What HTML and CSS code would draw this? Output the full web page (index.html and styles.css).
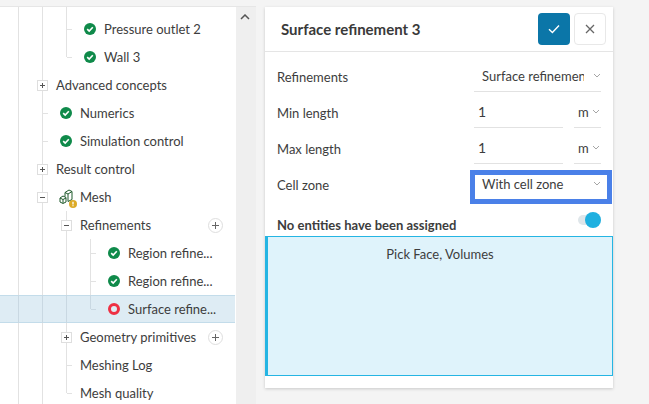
FILE: index.html
```html
<!DOCTYPE html>
<html lang="en">
<head>
<meta charset="utf-8">
<title>Surface refinement 3</title>
<link rel="stylesheet" href="styles.css">
</head>
<body>
<div class="page">
  <aside class="tree-panel">
    <div class="tree">
      <div class="row"><i class="g"></i><i class="g"></i><i class="g tee"></i><span class="ic"><svg class="ok" viewBox="0 0 12 12"><circle cx="6" cy="6" r="6"/><path d="M3.2 6.1l2 2 3.6-3.8"/></svg></span></div>
      <div class="row"><i class="g"></i><i class="g"></i><i class="g tee"></i><span class="ic"><svg class="ok" viewBox="0 0 12 12"><circle cx="6" cy="6" r="6"/><path d="M3.2 6.1l2 2 3.6-3.8"/></svg></span><span class="t">Pressure outlet 2</span></div>
      <div class="row"><i class="g"></i><i class="g"></i><i class="g end"></i><span class="ic"><svg class="ok" viewBox="0 0 12 12"><circle cx="6" cy="6" r="6"/><path d="M3.2 6.1l2 2 3.6-3.8"/></svg></span><span class="t">Wall 3</span></div>
      <div class="row"><i class="g"></i><i class="g"><b class="box plus"></b></i><span class="t">Advanced concepts</span></div>
      <div class="row"><i class="g"></i><i class="g tee"></i><span class="ic"><svg class="ok" viewBox="0 0 12 12"><circle cx="6" cy="6" r="6"/><path d="M3.2 6.1l2 2 3.6-3.8"/></svg></span><span class="t">Numerics</span></div>
      <div class="row"><i class="g"></i><i class="g tee"></i><span class="ic"><svg class="ok" viewBox="0 0 12 12"><circle cx="6" cy="6" r="6"/><path d="M3.2 6.1l2 2 3.6-3.8"/></svg></span><span class="t">Simulation control</span></div>
      <div class="row"><i class="g"></i><i class="g"><b class="box plus"></b></i><span class="t">Result control</span></div>
      <div class="row"><i class="g"></i><i class="g"><b class="box"></b></i><span class="ic"><svg class="mesh" viewBox="0 0 20 20"><path class="cube" d="M9 5.500L13 3l3 1.500v8l-4 2V7L9 5.500zM9 5.500v4M12 7l4-2.500M4 11l3-2 3 1.500v4.500l-3 1.500-3-1.500zM4 11l3 1.500 3-1.500M7 12.500v3.500"/><circle class="warn" cx="17" cy="17" r="4"/><path class="warn-mark" d="M17 14.700v2.700M17 18.300v.9"/></svg></span><span class="t">Mesh</span></div>
      <div class="row"><i class="g"></i><i class="g"></i><i class="g"><b class="box"></b></i><span class="t grow">Refinements</span><span class="add"></span></div>
      <div class="row"><i class="g"></i><i class="g"></i><i class="g"></i><i class="g tee"></i><span class="ic"><svg class="ok" viewBox="0 0 12 12"><circle cx="6" cy="6" r="6"/><path d="M3.2 6.1l2 2 3.6-3.8"/></svg></span><span class="t">Region refine...</span></div>
      <div class="row"><i class="g"></i><i class="g"></i><i class="g"></i><i class="g tee"></i><span class="ic"><svg class="ok" viewBox="0 0 12 12"><circle cx="6" cy="6" r="6"/><path d="M3.2 6.1l2 2 3.6-3.8"/></svg></span><span class="t">Region refine...</span></div>
      <div class="row selected"><i class="g"></i><i class="g"></i><i class="g"></i><i class="g end"></i><span class="ic"><span class="err"></span></span><span class="t">Surface refine...</span></div>
      <div class="row"><i class="g"></i><i class="g"></i><i class="g"><b class="box plus"></b></i><span class="t grow">Geometry primitives</span><span class="add"></span></div>
      <div class="row"><i class="g"></i><i class="g"></i><i class="g tee"></i><span class="t">Meshing Log</span></div>
      <div class="row"><i class="g"></i><i class="g"></i><i class="g end"></i><span class="t">Mesh quality</span></div>
    </div>
    <div class="scrollbar"><svg viewBox="0 0 10 6"><path d="M1 5l4-4 4 4"/></svg></div>
  </aside>

  <section class="card">
    <header class="card-head">
      <h1>Surface refinement 3</h1>
      <button class="btn ok-btn" type="button"><svg viewBox="0 0 12 10"><path d="M1 5.200l3.400 3.300L11 1.500"/></svg></button>
      <button class="btn close-btn" type="button"><svg viewBox="0 0 10 10"><path d="M1 1l8 8M9 1l-8 8"/></svg></button>
    </header>
    <div class="form">
      <div class="field">
        <label>Refinements</label>
        <div class="control select"><span class="val clip">Surface refinement</span><svg class="chev" viewBox="0 0 8 5"><path d="M1 1l3 3 3-3"/></svg></div>
      </div>
      <div class="field">
        <label>Min length</label>
        <div class="control input"><span class="num">1</span></div>
        <div class="control unit"><span>m</span><svg class="chev" viewBox="0 0 8 5"><path d="M1 1l3 3 3-3"/></svg></div>
      </div>
      <div class="field">
        <label>Max length</label>
        <div class="control input"><span class="num">1</span></div>
        <div class="control unit"><span>m</span><svg class="chev" viewBox="0 0 8 5"><path d="M1 1l3 3 3-3"/></svg></div>
      </div>
      <div class="field">
        <label>Cell zone</label>
        <div class="control select focus"><span class="val">With cell zone</span><svg class="chev" viewBox="0 0 8 5"><path d="M1 1l3 3 3-3"/></svg><span class="highlight"></span></div>
      </div>
      <div class="assign">
        <strong>No entities have been assigned</strong>
        <span class="toggle"><span class="knob"></span></span>
      </div>
    </div>
    <div class="picker">Pick Face, Volumes</div>
  </section>
</div>
</body>
</html>
```

FILE: styles.css
```css
* { box-sizing: border-box; }
html, body { margin: 0; height: 100%; overflow: hidden; }
body { background: #f4f4f4; font-family: Lato, "Open Sans", sans-serif; font-size: 13px; color: #3d3d3d; }
.page { display: flex; align-items: flex-start; height: 404px; padding-top: 6px; }

.tree-panel { display: flex; width: 256px; height: 398px; border-top: 1px solid #e6e6e6; overflow: hidden; flex: none; background: #fff; }
.tree { width: 236px; flex: none; margin-top: -20px; padding-left: 6px; }
.row { display: flex; align-items: center; height: 28px; margin-left: -6px; padding-left: 6px; padding-right: 13px; white-space: nowrap; }
.row.selected { background: #deecf4; box-shadow: inset 0 1px 0 #c3dcea, inset 0 -1px 0 #c3dcea; margin-right: 1px; padding-right: 12px; }
.g { position: relative; display: block; width: 24px; height: 28px; flex: none; }
.g::before { content: ""; position: absolute; left: 12px; top: 0; bottom: 0; width: 1px; background: #e2e2e2; }
.g.end::before { bottom: 14px; }
.g.tee::after, .g.end::after { content: ""; position: absolute; left: 13px; top: 14px; width: 5px; height: 1px; background: #e2e2e2; }
.selected .g::before, .selected .g::after { background: #c9d8e2; }
.box { position: absolute; left: 7px; top: 9px; width: 11px; height: 11px; background: #fff; border: 1px solid #dedede; }
.box::before { content: ""; position: absolute; left: 2px; top: 4px; width: 5px; height: 1px; background: #555; }
.box.plus::after { content: ""; position: absolute; left: 4px; top: 2px; width: 1px; height: 5px; background: #555; }
.ic { display: flex; align-items: center; justify-content: center; width: 24px; height: 28px; flex: none; }
.ok { width: 12px; height: 12px; }
.ok circle { fill: #0f8a4a; }
.ok path { fill: none; stroke: #fff; stroke-width: 1.6; }
.err { display: block; width: 12px; height: 12px; border-radius: 50%; border: 3px solid #ee3043; }
.mesh { width: 20px; height: 20px; overflow: visible; }
.cube { fill: none; stroke: #1f5a2c; stroke-width: 1; }
.warn { fill: #dcaa26; }
.warn-mark { stroke: #fff; stroke-width: 1.300; fill: none; }
.t { margin-left: 2px; line-height: 28px; font-size: 13px; }
.grow { flex: 1; }
.add { position: relative; width: 15px; height: 15px; flex: none; border: 1px solid #dedede; border-radius: 50%; background: #fff; }
.add::before { content: ""; position: absolute; left: 3px; top: 6px; width: 7px; height: 1px; background: #666; }
.add::after { content: ""; position: absolute; left: 6px; top: 3px; width: 1px; height: 7px; background: #666; }
.scrollbar { flex: 1; background: #efefef; display: flex; justify-content: center; padding-top: 7px; align-items: flex-start; padding-right: 2px; }
.scrollbar svg { width: 10px; height: 6px; }
.scrollbar path { fill: none; stroke: #555; stroke-width: 1.500; }

.card { width: 348px; height: 381px; margin-top: 1px; margin-left: 9px; background: #fff; box-shadow: 0 1px 3px rgba(0,0,0,.18); flex: none; }
.card-head { display: flex; align-items: center; gap: 4px; height: 45px; padding: 0 7px 0 16px; border-bottom: 1px solid #e5e5e5; }
.card-head h1 { flex: 1; margin: 0; font-size: 15px; font-weight: 700; color: #3a3a3a; }
.btn { display: flex; align-items: center; justify-content: center; width: 32px; height: 32px; padding: 0; border-radius: 4px; }
.ok-btn { background: #0b76a8; border: 0; }
.ok-btn svg { width: 12px; height: 10px; }
.ok-btn path { fill: none; stroke: #fff; stroke-width: 1.400; }
.close-btn { background: #fff; border: 1px solid #e8e8e8; }
.close-btn svg { width: 10px; height: 10px; }
.close-btn path { fill: none; stroke: #666; stroke-width: 1.300; }

.form { padding: 8px 12px 0; }
.field { display: flex; align-items: flex-start; height: 36px; }
.field label { width: 197px; flex: none; padding-top: 9px; line-height: 17px; font-size: 13px; }
.control { display: flex; align-items: center; height: 32px; border-bottom: 1px solid #e2e2e2; position: relative; }
.select { width: 127px; padding-left: 8px; }
.input { width: 89px; padding-left: 4px; }
.unit { width: 27px; margin-left: 11px; padding-left: 4px; }
.val { flex: 1; min-width: 0; white-space: nowrap; }
.clip { overflow: hidden; margin-right: 6px; }
.num { font-size: 14px; }
.chev { width: 8px; height: 5px; flex: none; margin-left: 3px; }
.chev path { fill: none; stroke: #a5a5a5; stroke-width: 1; }
.highlight { position: absolute; left: -4px; right: -11px; top: 2px; bottom: -5px; border: 5px solid #4a80e8; }
.assign { display: flex; align-items: center; justify-content: space-between; height: 32px; }
.assign strong { font-size: 13px; padding-top: 10px; }
.toggle { position: relative; display: block; width: 23px; height: 10px; border-radius: 5px; background: #dfe6ea; }
.knob { position: absolute; right: 0; top: -3px; width: 16px; height: 16px; border-radius: 50%; background: #1fb0e0; }
.picker { height: 140px; border: 1px solid #25b5e3; border-left-width: 3px; background: #dff3fb; text-align: center; padding-top: 9px; line-height: 17px; font-size: 13px; }
```
